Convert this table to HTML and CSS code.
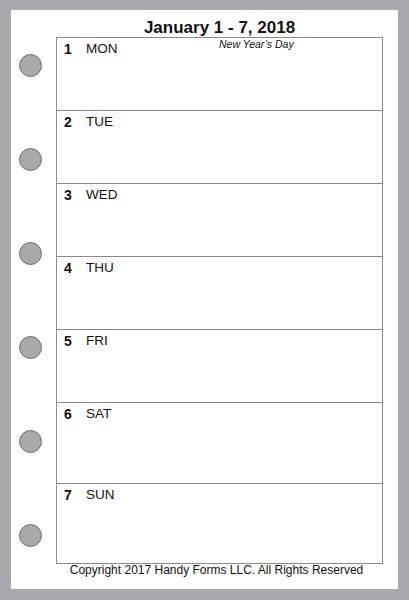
FILE: index.html
```html
<!DOCTYPE html>
<html>
<head>
<meta charset="utf-8">
<link rel="stylesheet" href="styles.css">
</head>
<body>
<div class="page">
  <div class="holes">
    <span class="hole"></span>
    <span class="hole"></span>
    <span class="hole"></span>
    <span class="hole"></span>
    <span class="hole"></span>
    <span class="hole"></span>
  </div>
  <div class="main">
    <h1 class="title">January 1 - 7, 2018</h1>
    <div class="box">
      <div class="row"><span class="num">1</span><span class="day">MON</span><span class="holiday">New Year’s Day</span></div>
      <div class="row"><span class="num">2</span><span class="day">TUE</span></div>
      <div class="row"><span class="num">3</span><span class="day">WED</span></div>
      <div class="row"><span class="num">4</span><span class="day">THU</span></div>
      <div class="row"><span class="num">5</span><span class="day">FRI</span></div>
      <div class="row tall"><span class="num">6</span><span class="day">SAT</span></div>
      <div class="row last"><span class="num">7</span><span class="day">SUN</span></div>
    </div>
    <p class="copy">Copyright 2017 Handy Forms LLC. All Rights Reserved</p>
  </div>
</div>
</body>
</html>
```

FILE: styles.css
```css
* { box-sizing: border-box; }
html, body { margin: 0; padding: 0; }
body {
  background: #a7a9ac;
  padding: 10px 11px 11px 11px;
  font-family: "Liberation Sans", Arial, sans-serif;
  color: #111;
  width: 409px;
  height: 600px;
}
.page {
  background: #fff;
  width: 387px;
  height: 579px;
  display: flex;
}
.holes {
  width: 45px;
  padding: 44px 0 0 8px;
  display: flex;
  flex-direction: column;
  gap: 71px;
}
.hole {
  display: block;
  width: 23px;
  height: 23px;
  border-radius: 50%;
  background: #a9a9a9;
  border: 1px solid #6f6f6f;
}
.main {
  width: 327px;
  display: flex;
  flex-direction: column;
}
.title {
  margin: 0;
  padding-top: 9px;
  height: 27px;
  font-size: 17px;
  line-height: 18px;
  font-weight: bold;
  text-align: center;
  color: #111;
}
.box {
  border: 1px solid #8a8a8a;
  display: flex;
  flex-direction: column;
}
.row {
  height: 73px;
  border-bottom: 1px solid #8a8a8a;
  display: flex;
  align-items: flex-start;
  padding: 3px 0 0 7px;
  font-size: 13.5px;
  line-height: 16px;
}
.row.tall { height: 81px; }
.row.last { height: 79px; border-bottom: none; }
.num {
  width: 22px;
  font-weight: bold;
  font-size: 14px;
}
.day {
  width: 133px;
}
.holiday {
  font-style: italic;
  font-size: 10.5px;
  line-height: 12px;
  margin-top: -3px;
}
.copy {
  margin: 0;
  font-size: 12px;
  line-height: 13px;
  text-align: center;
  padding-right: 6px;
}
```
